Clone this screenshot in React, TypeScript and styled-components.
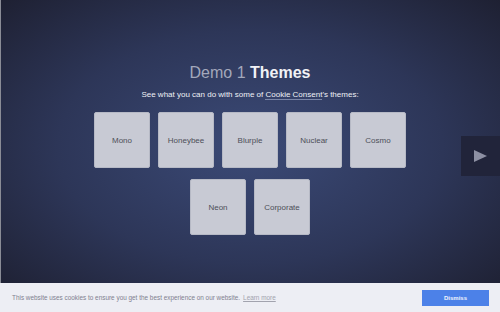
import React from "react";
import styled, { createGlobalStyle } from "styled-components";

const GlobalStyle = createGlobalStyle`
    html, body {
        margin: 0;
        padding: 0;
        width: 500px;
        height: 312px;
        overflow: hidden;
        font-family: "Liberation Sans", Arial, sans-serif;
    }
`

const Page = styled.div`
    width: 500px;
    height: 312px;
    display: flex;
    flex-direction: column;
`

const Stage = styled.div`
    position: relative;
    flex: 1;
    display: flex;
    flex-direction: column;
    align-items: center;
    padding-top: 63px;
    box-shadow: inset 1px 0 0 #8a8c96;
    background: radial-gradient(ellipse 70% 75% at 50% 52%, #3b4a77 0%, #2d3658 55%, #1e2032 100%);
`

const Title = styled.h1`
    margin: 0;
    font-size: 16px;
    line-height: 19px;
    font-weight: normal;
    color: #a3a8bb;
`

const Strong = styled.span`
    font-weight: bold;
    color: #f1f2f6;
`

const Lead = styled.p`
    margin: 7px 0 0;
    font-size: 8px;
    line-height: 11px;
    color: #eef0f5;
`

const Link = styled.a`
    color: #eef0f5;
    text-decoration: none;
    border-bottom: 1px solid #7b86a8;
`

const Tiles = styled.div`
    margin-top: 12px;
    width: 320px;
    display: flex;
    flex-wrap: wrap;
    justify-content: center;
    column-gap: 8px;
    row-gap: 11px;
`

const Tile = styled.button`
    width: 56px;
    height: 56px;
    padding: 0;
    border: 1px solid #b6b9c5;
    border-radius: 2px;
    background: #c8cad4;
    color: #4d4f58;
    font-family: "Liberation Sans", Arial, sans-serif;
    font-size: 8px;
    cursor: pointer;
`

const NextBtn = styled.button`
    position: absolute;
    right: 0;
    top: 136px;
    width: 39px;
    height: 40px;
    padding: 0;
    border: none;
    background: #21243a;
    display: flex;
    align-items: center;
    justify-content: center;
`

const Banner = styled.div`
    height: 29px;
    display: flex;
    align-items: center;
    justify-content: space-between;
    padding: 0 11px 0 12px;
    background: #edeef4;
`

const BannerText = styled.span`
    font-size: 6.4px;
    color: #80818f;
`

const LearnMore = styled.a`
    margin-left: 3px;
    color: #a2a3ae;
    text-decoration: underline;
`

const Dismiss = styled.button`
    width: 67px;
    height: 16px;
    padding: 0;
    border: none;
    background: #4c81e8;
    color: #f2f5fd;
    font-family: "Liberation Sans", Arial, sans-serif;
    font-size: 6px;
    font-weight: bold;
`

const themes = ["Mono", "Honeybee", "Blurple", "Nuclear", "Cosmo", "Neon", "Corporate"];

export default function App() {
    return (
        <>
            <GlobalStyle />
            <Page>
                <Stage>
                    <Title>Demo 1 <Strong>Themes</Strong></Title>
                    <Lead>See what you can do with some of <Link>Cookie Consent</Link>'s themes:</Lead>
                    <Tiles>
                        {themes.map((t) => <Tile key={t}>{t}</Tile>)}
                    </Tiles>
                    <NextBtn aria-label="next">
                        <svg width="13" height="12" viewBox="0 0 13 12">
                            <polygon points="0,0 13,6 0,12" fill="#8d90a3" />
                        </svg>
                    </NextBtn>
                </Stage>
                <Banner>
                    <BannerText>
                        This website uses cookies to ensure you get the best experience on our website.
                        <LearnMore>Learn more</LearnMore>
                    </BannerText>
                    <Dismiss>Dismiss</Dismiss>
                </Banner>
            </Page>
        </>
    )
}
